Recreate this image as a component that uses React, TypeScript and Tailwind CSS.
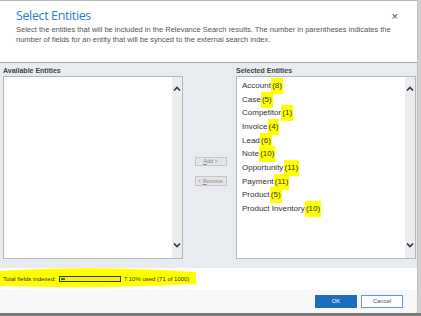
const selected = [
  { name: "Account", count: 8 },
  { name: "Case", count: 5 },
  { name: "Competitor", count: 1 },
  { name: "Invoice", count: 4 },
  { name: "Lead", count: 6 },
  { name: "Note", count: 10 },
  { name: "Opportunity", count: 11 },
  { name: "Payment", count: 11 },
  { name: "Product", count: 5 },
  { name: "Product Inventory", count: 10 },
];

function Chevron({ up }: { up?: boolean }) {
  return (
    <svg width="8" height="5" viewBox="0 0 8 5" className="block">
      <polyline
        points={up ? "1,4.5 4,1.5 7,4.5" : "1,0.5 4,3.5 7,0.5"}
        fill="none"
        stroke="#1f3a5c"
        strokeWidth="1.6"
      />
    </svg>
  );
}

function ScrollBar() {
  return (
    <div className="w-[10px] h-full bg-[#ededed] flex flex-col items-center justify-between pt-[9px] pb-[10px]">
      <Chevron up />
      <Chevron />
    </div>
  );
}

export default function App() {
  return (
    <div className="w-[421px] h-[316px] bg-[#d2d2d2] overflow-hidden font-['Liberation_Sans',Arial,sans-serif]">
      <div className="flex h-[313px]">
        <div className="w-[418px] h-full bg-white border-t border-r border-[#bdbdbd] flex flex-col">
          {/* Cabecera */}
          <div className="h-[62px] border-b border-[#a8a8a8] relative pl-[16px] pr-[20px] pt-[6px]">
            <div className="text-[12.5px] leading-[17px] text-[#2f7bcd] font-['Open_Sans',sans-serif] tracking-[-0.03em]">
              Select Entities
            </div>
            <div className="absolute right-[19px] top-[9px] text-[11px] leading-[12px] text-[#444]">×</div>
            <p className="mt-[1px] text-[7.5px] leading-[10px] text-[#555]">
              Select the entities that will be included in the Relevance Search results. The number in parentheses indicates the
              number of fields for an entity that will be synced to the external search index.
            </p>
          </div>

          {/* Listas */}
          <div className="h-[205px] bg-[#e8ebef] flex pl-[3px]">
            <div className="w-[180px] flex flex-col">
              <div className="h-[13px] pt-[3px] text-[7px] leading-[9px] font-bold text-[#444]">Available Entities</div>
              <div className="h-[183px] bg-white border border-[#b3b8be] flex justify-end">
                <ScrollBar />
              </div>
            </div>

            <div className="w-[53px] flex flex-col items-center pt-[94px] gap-[10px] pl-[2px]">
              <div className="w-[32px] h-[9px] bg-[#e4e4e4] border border-[#c6c6c6] text-[5.5px] leading-[7px] text-[#888] text-center">
                <span className="underline">A</span>dd &gt;
              </div>
              <div className="w-[32px] h-[10px] bg-[#e4e4e4] border border-[#c6c6c6] text-[5.5px] leading-[8px] text-[#888] text-center">
                &lt; <span className="underline">R</span>emove
              </div>
            </div>

            <div className="w-[180px] flex flex-col">
              <div className="h-[13px] pt-[3px] text-[7px] leading-[9px] font-bold text-[#444]">Selected Entities</div>
              <div className="h-[183px] bg-white border border-[#b3b8be] flex">
                <div className="flex-1 pt-[2px] pl-[5px]">
                  {selected.map((item) => (
                    <div key={item.name} className="h-[13.7px] flex items-center text-[8px] text-[#333]">
                      <span>{item.name}&nbsp;</span>
                      <span className="bg-[#ffff00] px-[1px] py-[2px] -ml-[2px]">({item.count})</span>
                    </div>
                  ))}
                </div>
                <ScrollBar />
              </div>
            </div>
          </div>

          {/* Total de campos */}
          <div className="h-[22px] relative flex items-center pl-[3px] text-[6px] text-[#333]">
            <svg className="absolute left-0 top-0" width="200" height="22" viewBox="0 0 200 22">
              <path d="M0,3 Q90,-3 196,4 L196,16 Q100,21 0,18 Z" fill="#ffff00" />
            </svg>
            <span className="relative">Total fields indexed:</span>
            <div className="relative ml-[3px] w-[62px] h-[6px] border border-[#3a3a1a] bg-[#f4f400] p-[1px]">
              <div className="w-[4px] h-full bg-[#1e8a1e]" />
            </div>
            <span className="relative ml-[3px]">7.10% used (71 of 1000)</span>
          </div>

          {/* Botones */}
          <div className="flex-1 bg-[#f7f7f7] flex justify-end items-center pr-[14px] gap-[4px]">
            <div className="w-[42px] h-[13px] bg-[#1d6cc0] text-white text-[6px] leading-[13px] text-center">OK</div>
            <div className="w-[42px] h-[13px] bg-white border border-[#5b9bd8] text-[#3a5a80] text-[6px] leading-[11px] text-center">
              Cancel
            </div>
          </div>
        </div>
      </div>
      <div className="h-[3px] bg-[#7b7b7b]" />
    </div>
  );
}
